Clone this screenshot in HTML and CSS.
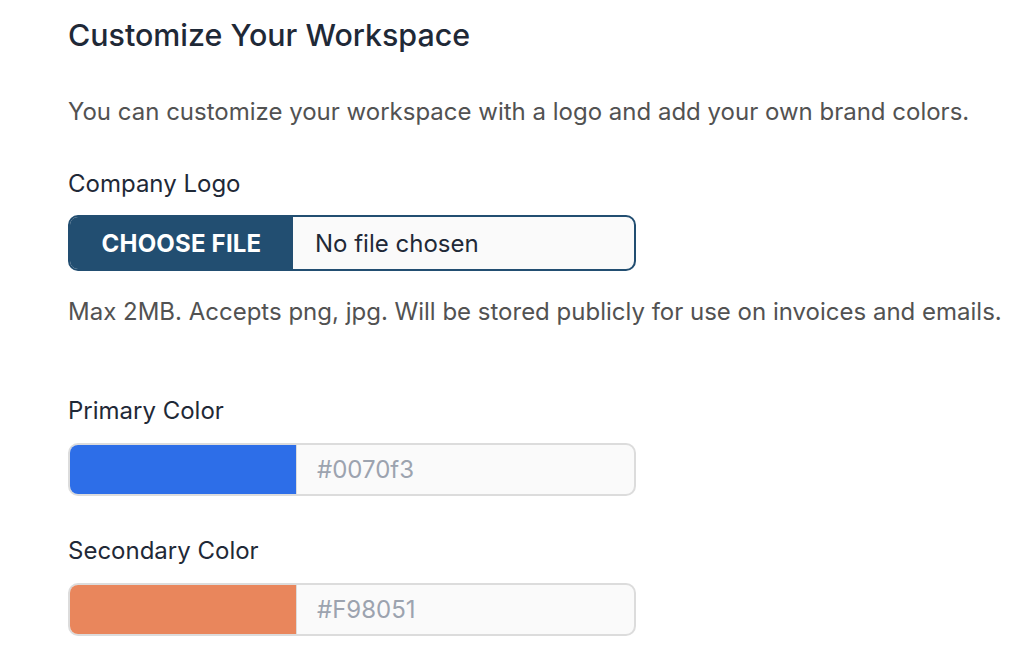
FILE: index.html
```html
<!DOCTYPE html>
<html>
  <head>
    <meta charset="utf-8" />
    <title>Customize Your Workspace</title>
    <link rel="stylesheet" href="styles.css">
  </head>
<body>

  <div class="workspace">
    <h1>Customize Your Workspace</h1>

    <p class="intro">
      You can customize your workspace with a logo and add your own brand colors.
    </p>

    <div class="field">
      <label class="label">Company Logo</label>
      <div class="file-input">
        <span class="file-button">CHOOSE FILE</span>
        <span class="file-name">No file chosen</span>
      </div>
      <p class="help">Max 2MB. Accepts png, jpg. Will be stored publicly for use on invoices and emails.</p>
    </div>

    <div class="field color-field">
      <label class="label">Primary Color</label>
      <div class="color-input">
        <span class="swatch primary"></span>
        <span class="color-value">#0070f3</span>
      </div>
    </div>

    <div class="field color-field">
      <label class="label">Secondary Color</label>
      <div class="color-input">
        <span class="swatch secondary"></span>
        <span class="color-value">#F98051</span>
      </div>
    </div>
  </div>

</body>
</html>
```
FILE: styles.css
```css
body
{
  margin: 0;
  padding: 16px 0 0 68px;
  background-color: #fff;
  font-family: Inter, "Liberation Sans", sans-serif;
  color: #1f2937;
  white-space: nowrap;
}

h1
{
  margin: 0;
  font-size: 30.4px;
  line-height: 38px;
  font-weight: 500;
  color: #1f2937;
}

.intro
{
  margin: 42px 0 0 0;
  font-size: 24px;
  line-height: 32px;
  color: #525252;
}

.field
{
  display: flex;
  flex-direction: column;
  align-items: flex-start;
}

.label
{
  display: block;
  margin-top: 40px;
  font-size: 24px;
  line-height: 32px;
  color: #1f2937;
}

.file-input
{
  display: flex;
  align-items: stretch;
  width: 568px;
  height: 56px;
  margin-top: 15px;
  box-sizing: border-box;
  border: 2px solid #224e71;
  border-radius: 10px;
  overflow: hidden;
  background-color: #fafafa;
}

.file-button
{
  display: flex;
  align-items: center;
  justify-content: center;
  width: 223px;
  background-color: #224e71;
  color: #fff;
  font-size: 24px;
  font-weight: 700;
  letter-spacing: 0.2px;
}

.file-name
{
  display: flex;
  align-items: center;
  padding-left: 22px;
  font-size: 24px;
  color: #1f2937;
}

.help
{
  margin: 25px 0 0 0;
  font-size: 24px;
  line-height: 32px;
  color: #525252;
}

.color-field .label
{
  margin-top: 67px;
}

.color-field + .color-field .label
{
  margin-top: 39px;
}

.color-input
{
  display: flex;
  width: 568px;
  height: 53px;
  margin-top: 16px;
  box-sizing: border-box;
  border: 2px solid #dcdcdc;
  border-radius: 10px;
  overflow: hidden;
  background-color: #fafafa;
}

.swatch
{
  width: 226px;
}

.swatch.primary
{
  background-color: #2d6ee8;
}

.swatch.secondary
{
  background-color: #e9865c;
}

.color-value
{
  display: flex;
  align-items: center;
  padding-left: 20px;
  border-left: 1px solid #dcdcdc;
  font-size: 24px;
  color: #9ca3af;
}
```
